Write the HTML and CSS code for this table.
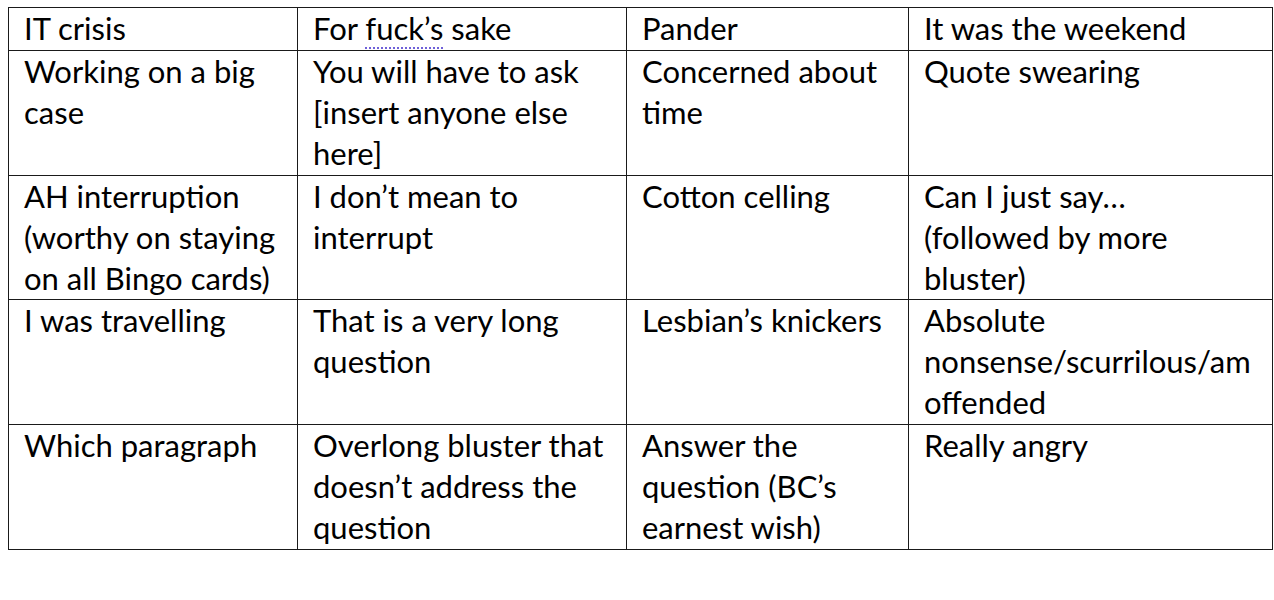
FILE: index.html
```html
<!DOCTYPE html>
<html>
<head>
<meta charset="utf-8">
<link rel="stylesheet" href="styles.css">
</head>
<body>
<table class="bingo">
  <colgroup>
    <col class="c1"><col class="c2"><col class="c3"><col class="c4">
  </colgroup>
  <tr class="r1">
    <td>IT crisis</td>
    <td>For <span class="spell">fuck’s</span> sake</td>
    <td>Pander</td>
    <td>It was the weekend</td>
  </tr>
  <tr class="r3">
    <td>Working on a big<br>case</td>
    <td>You will have to ask<br>[insert anyone else<br>here]</td>
    <td>Concerned about<br>time</td>
    <td>Quote swearing</td>
  </tr>
  <tr class="r3 short">
    <td>AH interruption<br>(worthy on staying<br>on all Bingo cards)</td>
    <td>I don’t mean to<br>interrupt</td>
    <td>Cotton celling</td>
    <td>Can I just say…<br>(followed by more<br>bluster)</td>
  </tr>
  <tr class="r3">
    <td>I was travelling</td>
    <td>That is a very long<br>question</td>
    <td>Lesbian’s knickers</td>
    <td>Absolute<br>nonsense/scurrilous/am<br>offended</td>
  </tr>
  <tr class="r3">
    <td>Which paragraph</td>
    <td>Overlong bluster that<br>doesn’t address the<br>question</td>
    <td>Answer the<br>question (BC’s<br>earnest wish)</td>
    <td>Really angry</td>
  </tr>
</table>
</body>
</html>
```

FILE: styles.css
```css
html, body {
  margin: 0;
  padding: 0;
  background: #ffffff;
}
body {
  padding: 7px 0 0 8px;
}
.bingo {
  border-collapse: collapse;
  table-layout: fixed;
  width: 1264px;
  font-family: Lato, "Liberation Sans", sans-serif;
  font-size: 31px;
  line-height: 41px;
  color: #000;
}
.c1 { width: 289px; }
.c2 { width: 329px; }
.c3 { width: 282px; }
.c4 { width: 364px; }
.bingo td {
  border: 1px solid #1a1a1a;
  vertical-align: top;
  padding: 0 2px 0 15px;
  white-space: nowrap;
  overflow: hidden;
}
.r1 td { height: 42px; }
.r3 td { height: 124px; }
.r3.short td { height: 122px; }
.spell {
  text-decoration: underline dotted #6f61d9;
  text-decoration-thickness: 2px;
  text-underline-offset: 7px;
}
```
